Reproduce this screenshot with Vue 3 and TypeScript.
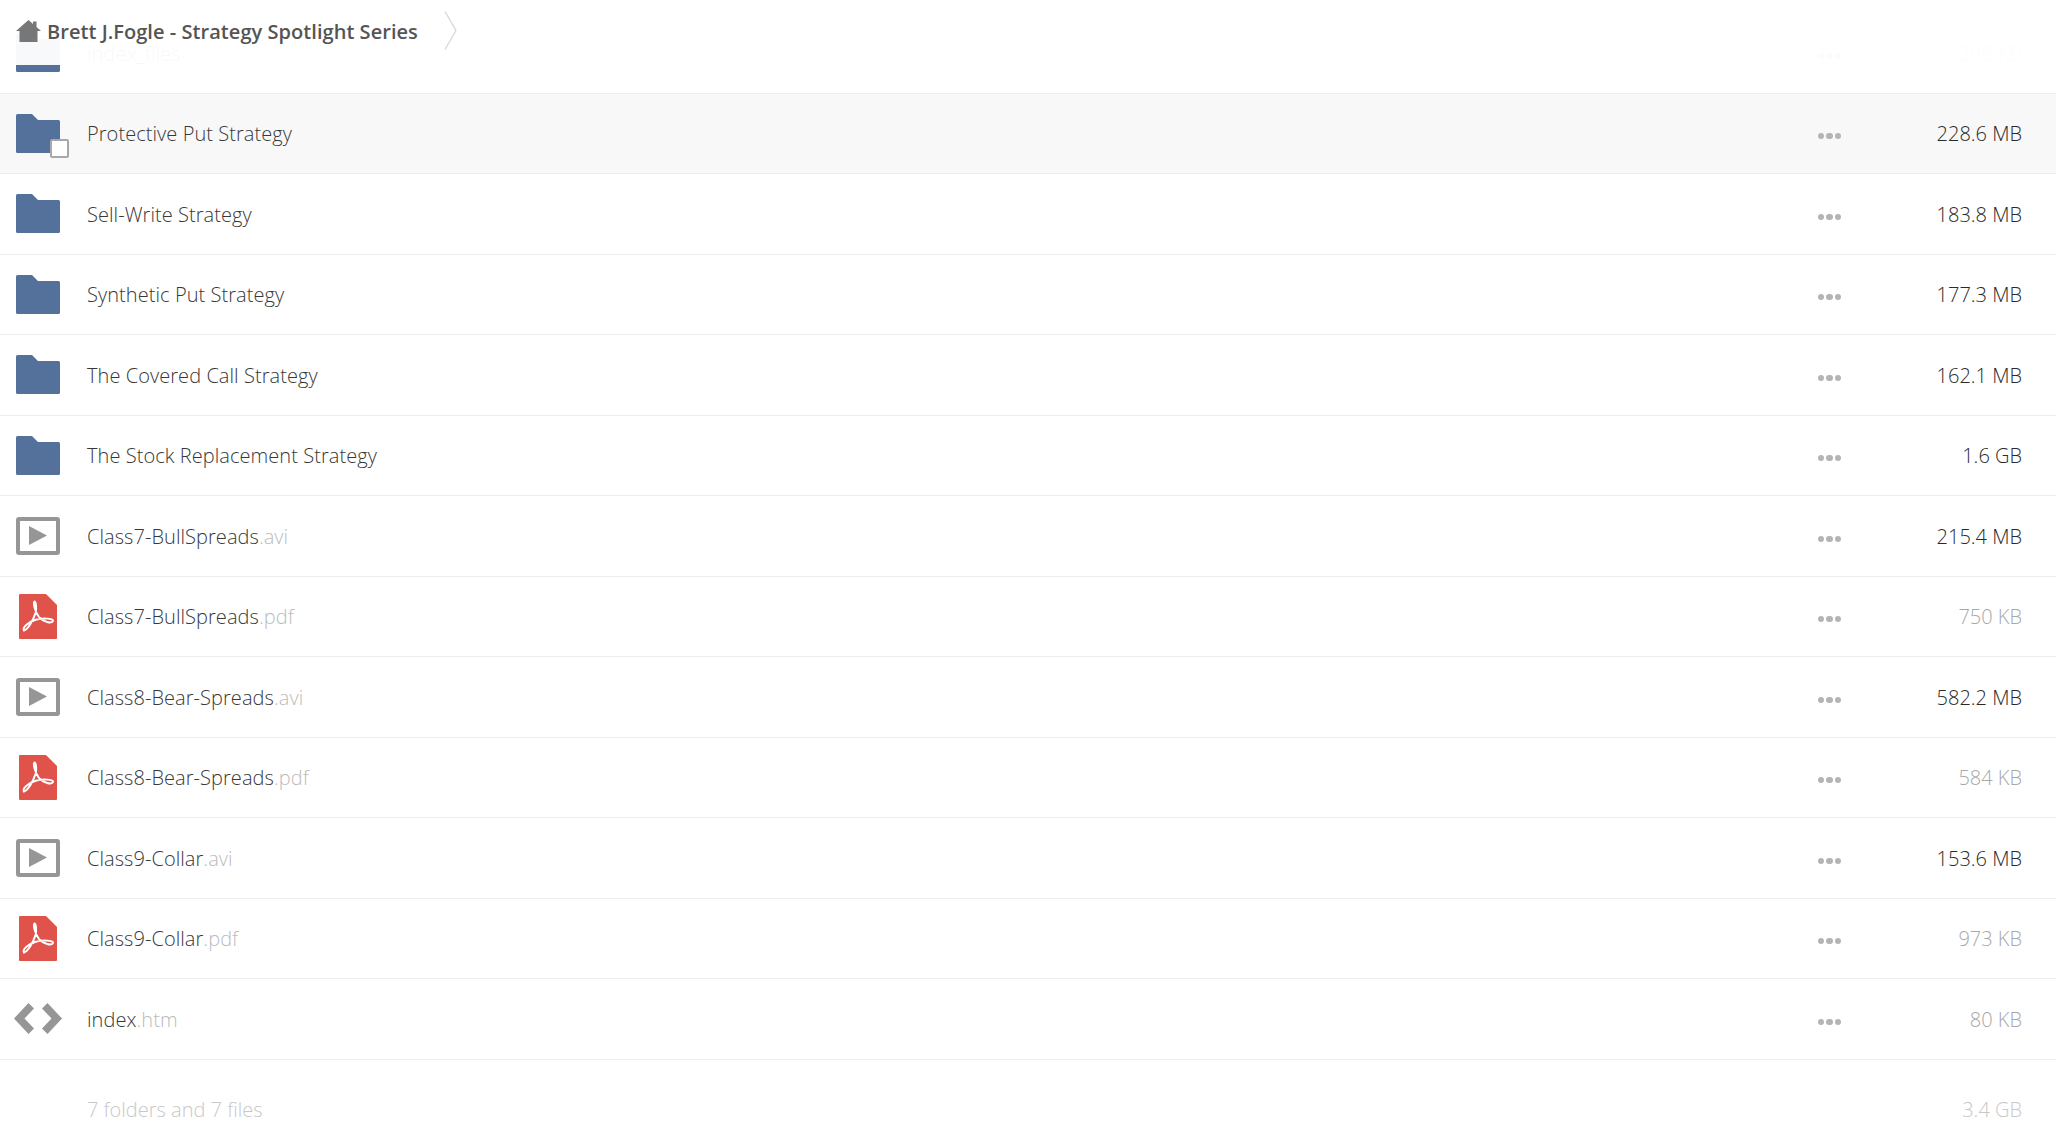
<script setup lang="ts">
type Kind = 'folder' | 'video' | 'pdf' | 'code'

interface FileRow {
  name: string
  ext?: string
  kind: Kind
  size: string
  small?: boolean
}

const rows: FileRow[] = [
  { name: 'index_files', kind: 'folder', size: '208 KB', small: true },
  { name: 'Protective Put Strategy', kind: 'folder', size: '228.6 MB' },
  { name: 'Sell-Write Strategy', kind: 'folder', size: '183.8 MB' },
  { name: 'Synthetic Put Strategy', kind: 'folder', size: '177.3 MB' },
  { name: 'The Covered Call Strategy', kind: 'folder', size: '162.1 MB' },
  { name: 'The Stock Replacement Strategy', kind: 'folder', size: '1.6 GB' },
  { name: 'Class7-BullSpreads', ext: '.avi', kind: 'video', size: '215.4 MB' },
  { name: 'Class7-BullSpreads', ext: '.pdf', kind: 'pdf', size: '750 KB', small: true },
  { name: 'Class8-Bear-Spreads', ext: '.avi', kind: 'video', size: '582.2 MB' },
  { name: 'Class8-Bear-Spreads', ext: '.pdf', kind: 'pdf', size: '584 KB', small: true },
  { name: 'Class9-Collar', ext: '.avi', kind: 'video', size: '153.6 MB' },
  { name: 'Class9-Collar', ext: '.pdf', kind: 'pdf', size: '973 KB', small: true },
  { name: 'index', ext: '.htm', kind: 'code', size: '80 KB', small: true },
]

// the second row is the one under the mouse
const hoveredRow = 1
</script>

<template>
  <div class="page">
    <header class="crumbs">
      <svg class="home" viewBox="0 0 25 22" width="25" height="22">
        <path d="M12.5 0 L17 4 V1.5 H20.5 V7 L25 11 H21.5 V22 H3.5 V11 H0 Z" fill="#777" />
      </svg>
      <span class="crumb-title">Brett J.Fogle - Strategy Spotlight Series</span>
      <svg class="chevron" viewBox="0 0 13 39" width="13" height="39">
        <path d="M1 0.5 L12 19.5 L1 38.5" fill="none" stroke="#d4d4d4" stroke-width="1.2" />
      </svg>
    </header>

    <div class="list">
      <div
        v-for="(row, i) in rows"
        :key="row.name + (row.ext ?? '')"
        :class="['row', { hover: i === hoveredRow }]"
      >
        <div class="icon">
          <svg v-if="row.kind === 'folder'" viewBox="0 0 44 39" width="44" height="39">
            <path
              d="M1.5 0 H16 L22 6 H42.5 Q44 6 44 7.5 V37.5 Q44 39 42.5 39 H1.5 Q0 39 0 37.5 V1.5 Q0 0 1.5 0 Z"
              fill="#53719b"
            />
          </svg>
          <svg v-else-if="row.kind === 'video'" class="video" viewBox="0 0 44 38" width="44" height="38">
            <rect x="2" y="2" width="40" height="34" rx="1" fill="#fff" stroke="#969696" stroke-width="4" />
            <path d="M13 9 L31 18.5 L13 28 Z" fill="#969696" />
          </svg>
          <svg v-else-if="row.kind === 'pdf'" viewBox="0 0 38 45" width="38" height="45">
            <path d="M1 0 H27 L38 11 V44 Q38 45 37 45 H1 Q0 45 0 44 V1 Q0 0 1 0 Z" fill="#e0534b" />
            <path
              d="M5 36.5 C9 35 14 27 16.5 19 C18 13 16.5 7 15.5 7.5 C14 8.5 15.5 17 20 23 C24 28 33 30 34 27 C35 24.5 23 23.5 16 26 C10 28 3 33 5 36.5 Z"
              fill="none"
              stroke="#fff"
              stroke-width="2"
            />
          </svg>
          <svg v-else viewBox="0 0 48 31" width="48" height="31">
            <path
              d="M0 15.5 L14.5 0 L20 5.5 L10.5 15.5 L20 25.5 L14.5 31 Z M48 15.5 L33.5 0 L28 5.5 L37.5 15.5 L28 25.5 L33.5 31 Z"
              fill="#969696"
            />
          </svg>
          <span v-if="i === hoveredRow" class="check"></span>
        </div>
        <div class="name">
          {{ row.name }}<span v-if="row.ext" class="ext">{{ row.ext }}</span>
        </div>
        <div class="more"><i></i><i></i><i></i></div>
        <div :class="['size', { small: row.small }]">{{ row.size }}</div>
      </div>

      <div class="summary">
        <span>7 folders and 7 files</span>
        <span>3.4 GB</span>
      </div>
    </div>
  </div>
</template>

<style scoped>
.page {
  position: relative;
  height: 1134px;
  overflow: hidden;
  background: #fff;
  font-family: "Open Sans", "Liberation Sans", sans-serif;
  font-weight: 300;
  font-size: 20px;
  color: #383838;
}
.crumbs {
  box-sizing: border-box;
  position: absolute;
  top: 0;
  left: 0;
  right: 0;
  height: 65px;
  z-index: 2;
  display: flex;
  align-items: flex-start;
  padding: 11px 0 0 16px;
  background: rgba(255, 255, 255, 0.96);
}
.home {
  margin: 9px 6px 0 0;
}
.crumb-title {
  margin-top: 7px;
  font-size: 20px;
  line-height: 27px;
  font-weight: 600;
  letter-spacing: 0.05px;
  color: #555;
}
.chevron {
  margin-left: 26px;
}
.list {
  padding-top: 13px;
}
.row {
  box-sizing: border-box;
  height: 80.5px;
  display: flex;
  align-items: center;
  border-bottom: 1px solid #ededed;
  padding-left: 16px;
}
.row.hover {
  background: #f8f8f8;
}
.icon {
  position: relative;
  width: 44px;
  height: 45px;
  display: flex;
  align-items: center;
  justify-content: center;
  flex-shrink: 0;
}
.icon svg {
  flex-shrink: 0;
}
.icon .video {
  margin-top: 1px;
}
.check {
  box-sizing: border-box;
  position: absolute;
  left: 34px;
  top: 28px;
  width: 19px;
  height: 19px;
  background: #fff;
  border: 2px solid #a8a8a8;
  border-radius: 2px;
}
.name {
  margin-left: 27px;
  margin-top: 1px;
  flex: 1;
  white-space: nowrap;
  letter-spacing: 0.06px;
}
.ext {
  opacity: 0.35;
}
.more {
  display: flex;
  gap: 2px;
  margin-top: 6px;
}
.more i {
  width: 6.4px;
  height: 6.4px;
  border-radius: 50%;
  background: #b4b4b4;
}
.size {
  width: 146px;
  margin-top: 1px;
  margin-right: 34px;
  margin-left: 35px;
  text-align: right;
  color: #2a2a2a;
}
.size.small {
  color: #a8a8a8;
}
.summary {
  display: flex;
  justify-content: space-between;
  padding: 36px 34px 0 87px;
  color: #c8c8c8;
}
</style>

<style>
html,
body {
  margin: 0;
  overflow: hidden;
}
</style>
